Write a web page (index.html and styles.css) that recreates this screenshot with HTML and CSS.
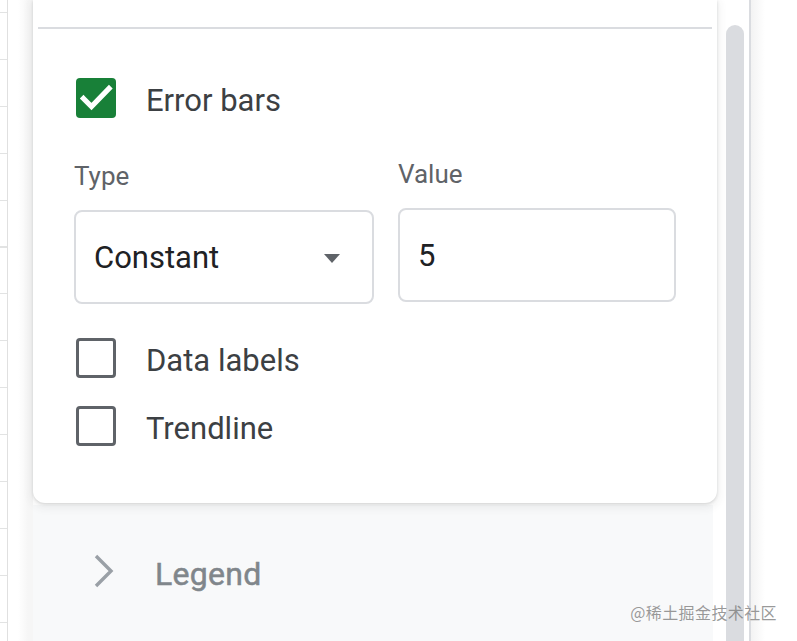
FILE: index.html
```html
<!DOCTYPE html>
<html lang="en">
<head>
<meta charset="utf-8">
<title>Chart editor – Error bars</title>
<link rel="stylesheet" href="styles.css">
</head>
<body>
<div class="page">
  <div class="sheet"></div>
  <div class="panel">
    <div class="content">
      <section class="card">
        <div class="divider"></div>
        <div class="check-row">
          <span class="box checked">
            <svg viewBox="0 0 40 40" width="40" height="40"><path d="M7.5 20.5 L15.5 28.5 L33 10.5" fill="none" stroke="#fff" stroke-width="5.2" stroke-linecap="square"/></svg>
          </span>
          <span class="check-label">Error bars</span>
        </div>
        <div class="fields">
          <div class="field type">
            <div class="field-label">Type</div>
            <div class="select">
              <span class="select-text">Constant</span>
              <svg class="caret" viewBox="0 0 16 9" width="16" height="9"><path d="M0 0 H16 L8 9 Z" fill="#5f6368"/></svg>
            </div>
          </div>
          <div class="field value">
            <div class="field-label">Value</div>
            <div class="input">5</div>
          </div>
        </div>
        <div class="check-row first-plain">
          <span class="box"></span>
          <span class="check-label">Data labels</span>
        </div>
        <div class="check-row second-plain">
          <span class="box"></span>
          <span class="check-label">Trendline</span>
        </div>
      </section>
      <section class="legend">
        <div class="legend-row">
          <svg class="chevron" viewBox="0 0 22 34" width="22" height="34"><path d="M3 2 L18 17 L3 32" fill="none" stroke="#9aa0a6" stroke-width="3.4"/></svg>
          <span class="legend-title">Legend</span>
        </div>
      </section>
    </div>
    <div class="scroll"><div class="thumb"></div></div>
  </div>
  <div class="outside"></div>
</div>
<div class="watermark">@稀土掘金技术社区</div>
</body>
</html>
```
FILE: styles.css
```css
html, body {
  margin: 0;
  padding: 0;
  background: #fff;
  font-family: Roboto, "Liberation Sans", sans-serif;
  color: #3c4043;
}
body {
  width: 797px;
  height: 641px;
  overflow: hidden;
  position: relative;
}
.page {
  display: flex;
  height: 641px;
}
.sheet {
  width: 7px;
  border-right: 1px solid #e0e0e0;
  background-image: repeating-linear-gradient(to bottom, transparent 0, transparent 12px, #e2e3e3 12px, #e2e3e3 13px, transparent 13px, transparent 46.9px);
  flex: none;
}
.panel {
  flex: none;
  width: 743px;
  display: flex;
  padding-left: 25px;
  box-sizing: border-box;
  border-right: 2px solid #dadce0;
  background: linear-gradient(to right, #fff 0, #fff 10px, #f6f6f6 20px, #f6f6f6 25px, #fff 25px);
}
.content {
  width: 684px;
  flex: none;
  display: flex;
  flex-direction: column;
  background: #fff;
}
.card {
  background: #fff;
  border-radius: 0 0 12px 12px;
  box-shadow: 0 1px 3px rgba(60, 64, 67, 0.18), 0 3px 8px 2px rgba(60, 64, 67, 0.08);
  padding: 27px 0 57px 41px;
  position: relative;
  z-index: 1;
}
.divider {
  height: 2px;
  background: #dadce0;
  margin: 0 5px 0 -36px;
}
.check-row {
  display: flex;
  align-items: center;
  height: 40px;
  margin-top: 49px;
  margin-left: 2px;
}
.check-row.first-plain {
  margin-top: 34px;
}
.check-row.second-plain {
  margin-top: 28px;
}
.box {
  width: 40px;
  height: 40px;
  box-sizing: border-box;
  border: 3px solid #5f6368;
  border-radius: 4px;
  flex: none;
  display: flex;
}
.box.checked {
  border: none;
  background: #188038;
  border-radius: 4px;
}
.check-label {
  margin-left: 30px;
  margin-top: 6px;
  font-size: 31px;
  color: #3c4043;
  line-height: 40px;
}
.fields {
  display: flex;
  gap: 24px;
  margin-top: 43px;
}
.field {
  display: flex;
  flex-direction: column;
}
.field.type {
  width: 300px;
}
.field.value {
  width: 278px;
  margin-top: -2px;
}
.field-label {
  font-size: 26px;
  line-height: 30px;
  color: #5f6368;
  margin-bottom: 19px;
}
.select, .input {
  height: 94px;
  box-sizing: border-box;
  border: 2px solid #dadce0;
  border-radius: 8px;
  display: flex;
  align-items: center;
  font-size: 31px;
  color: #202124;
  padding-left: 18px;
}
.select {
  justify-content: space-between;
  padding-right: 32px;
}
.caret {
  flex: none;
  margin-top: 2px;
}
.legend {
  flex: 1;
  background: #f8f9fa;
  margin-top: 2px;
  margin-right: 4px;
  padding: 46px 0 0 60px;
}
.legend-row {
  display: flex;
  align-items: center;
  height: 40px;
}
.chevron {
  flex: none;
}
.legend-title {
  margin-left: 40px;
  font-size: 32px;
  font-weight: 400;
  color: #80868b;
  margin-top: 6px;
  letter-spacing: 0.3px;
  -webkit-text-stroke: 0.5px #80868b;
}
.scroll {
  flex: none;
  width: 36px;
  padding-top: 25px;
  padding-left: 9px;
  box-sizing: border-box;
}
.thumb {
  width: 18px;
  height: 100%;
  background: #dadce0;
  border-radius: 9px 9px 0 0;
}
.outside {
  flex: 1;
  background: linear-gradient(to right, #f3f3f3 0, #fff 14px);
}
.watermark {
  position: absolute;
  right: 20px;
  bottom: 19px;
  font-family: "Noto Sans CJK SC", "Noto Sans", sans-serif;
  font-size: 16px;
  line-height: 20px;
  color: rgba(120, 120, 120, 0.75);
  letter-spacing: 0.4px;
}
```
